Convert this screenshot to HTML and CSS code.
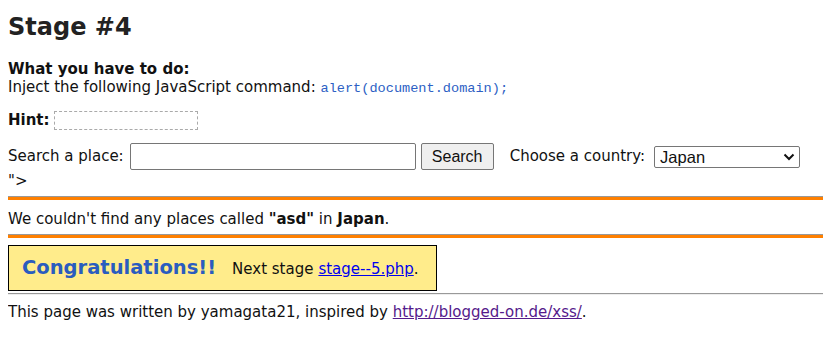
FILE: index.html
```html
<!DOCTYPE html>
<html lang="en">
<head>
    <meta charset="utf-8">
    <title>Stage #4</title>
    <link rel="stylesheet" href="styles.css">
</head>
<body>
    <h1>Stage #4</h1>

    <div class="task">
        <b>What you have to do:</b><br>
        Inject the following JavaScript command: <code>alert(document.domain);</code>
    </div>

    <div class="hint">
        <b>Hint:</b>
        <span class="hint-box"></span>
    </div>

    <form class="search" action="#">
        <label>Search a place:</label>
        <input type="text" class="place">
        <input type="submit" class="btn" value="Search">
        <label class="country-label">Choose a country:</label>
        <span class="select-wrap">
            <select class="country">
                <option>Japan</option>
            </select>
            <svg class="chevron" width="12" height="8" viewBox="0 0 12 8"><path d="M1.5 1.5 L6 6 L10.5 1.5" fill="none" stroke="#111" stroke-width="2"/></svg>
        </span>
    </form>
    <div class="leak">"&gt;</div>

    <hr class="result-line">
    <div class="result">We couldn't find any places called <b>"asd"</b> in <b>Japan</b>.</div>
    <hr class="result-line">

    <div class="congrats">
        <span class="congrats-title">Congratulations!!</span>
        Next stage <a href="#">stage--5.php</a>.
    </div>

    <hr class="footer-line">
    <div class="footer">This page was written by yamagata21, inspired by <a class="visited" href="#">http://blogged-on.de/xss/</a>.</div>
</body>
</html>
```

FILE: styles.css
```css
body { font-family: "DejaVu Sans", Verdana, sans-serif; font-size: 15px; line-height: 19px; color: #111; margin: 8px 3px 8px 8px; background: white; }
h1 { font-size: 24px; line-height: 28px; color: #222; margin: 5px 0 19px; }
.task { margin: 0; line-height: 18px; }
code { font-family: "Liberation Mono", monospace; font-size: 13.6px; color: #2d5fc4; }
.hint { display: flex; align-items: center; gap: 4px; margin-top: 13px; height: 19px; }
.hint-box { display: inline-block; width: 142px; height: 17px; border: 1px dashed #aaa; }
.search { display: flex; align-items: center; margin-top: 13px; height: 27px; }
.place { width: 286px; height: 27px; box-sizing: border-box; margin: 0 0 0 6px; border: 1px solid #767676; border-radius: 2px; padding: 2px 4px; font-size: 15px; }
.btn { width: 73px; height: 27px; box-sizing: border-box; margin: 0 0 0 5px; background: #efefef; border: 1px solid #767676; border-radius: 2px; font-family: "Liberation Sans", Arial, sans-serif; font-size: 16px; color: #111; padding: 0; }
.country-label { margin-left: 16px; }
.select-wrap { position: relative; display: inline-block; margin-left: 9px; }
.country { appearance: none; -webkit-appearance: none; width: 146px; height: 22px; box-sizing: border-box; border: 1px solid #767676; border-radius: 2px; background: white; font-family: "Liberation Sans", Arial, sans-serif; font-size: 16.5px; color: #111; padding: 0 5px; display: block; }
.chevron { position: absolute; right: 5px; top: 7px; pointer-events: none; }
.leak { margin-top: 2px; }
.result-line { height: 0; border: 0; border-top: 1px solid #999; border-bottom: 3px solid #ff8000; margin: 5px 0 0; }
.result { margin: 10px 0 5px; }
.congrats { display: flex; align-items: baseline; width: 400px; height: 44px; box-sizing: content-box; margin-top: 7px; padding: 0 14px 0 13px; background: #ffec8b; border: 1px solid #000; align-content: center; flex-wrap: wrap; }
.congrats-title { font-size: 19.5px; font-weight: bold; color: #2a5cbf; margin-right: 16px; }
.congrats a { color: #0000ee; margin-left: 5px; }
.footer-line { height: 0; border: 0; border-top: 1px solid #999; border-bottom: 1px solid #eee; margin: 2px 0 0; }
.footer { margin-top: 8px; }
.footer a.visited { color: #551a8b; }
```
